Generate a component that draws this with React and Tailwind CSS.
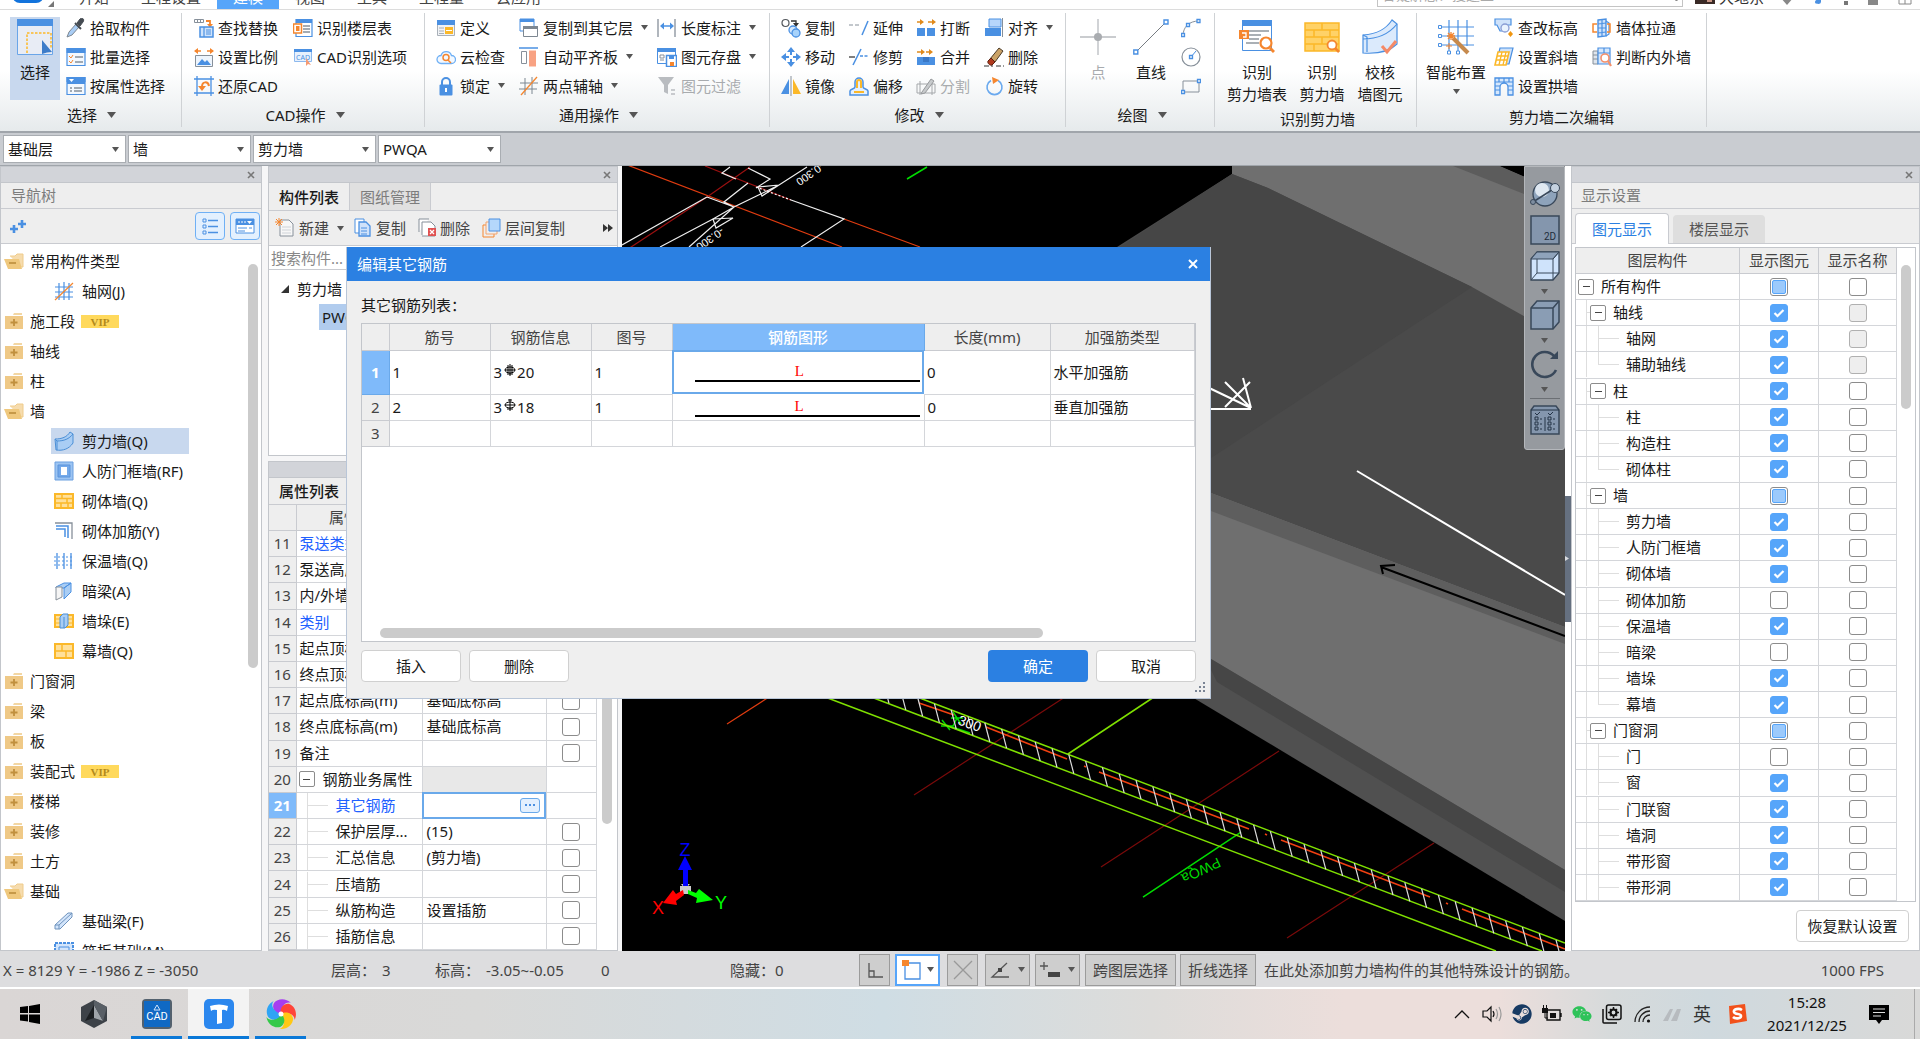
import React from "react";
import { FaSteam, FaWeixin } from "react-icons/fa";

const B = "#4a90e2";
const G = "#87909a";
const O = "#f5862e";
const Y = "#fbb829";

function Svg({ s = 20, vb = 20, children, className = "" }) {
  return (
    <svg
      width={s}
      height={s}
      viewBox={`0 0 ${vb} ${vb}`}
      fill="none"
      aria-hidden="true"
      className={"shrink-0 " + className}
    >
      {children}
    </svg>
  );
}

const windowFrame = (
  <>
    <path d="M1 1.500h18v17H1z" fill="#f3f8fe" stroke={B} strokeWidth="1.200" />
    <path d="M.5 1h19v5H.5z" fill={B} />
  </>
);

const icons = {
  pick: (
    <Svg>
      <path d="M1 19l2-5 7-8 3 3-7 8z" fill="#a9cdf5" stroke="#7d8791" />
      <path d="M9 5l6 6" stroke="#454b52" strokeWidth="2" />
      <path d="M11 5l3-4c2-2 5 0 3 3l-3 4z" fill="#454b52" stroke="#454b52" />
    </Svg>
  ),
  batch: (
    <Svg>
      {windowFrame}
      <path d="M3 9l2 2 2-3M3 14l2 2 2-3" stroke={O} />
      <path d="M9 10h8M9 15h8" stroke={G} strokeWidth="1.500" />
    </Svg>
  ),
  byprop: (
    <Svg>
      {windowFrame}
      <path d="M1 2h18v6H1z" fill={B} />
      <path d="M3 3h5l-2.500 3z" fill="#fff" />
      <path d="M4 12h2M8 12h8M4 15h2M8 15h8" stroke={G} strokeWidth="1.500" />
    </Svg>
  ),
  replace: (
    <Svg>
      <path d="M.5 1.500h9v3h-9zM3.500 1.500v3M6.500 1.500v3" stroke={G} />
      <path d="M12 3h4v4" stroke={O} strokeWidth="1.800" />
      <path d="M13 6h6l-3 3.500z" fill={O} />
      <path d="M6 9h13v10H6z" fill="#cfe3fb" stroke={B} strokeWidth="1.500" />
      <path d="M10 9v10M12 12h5M12 14h5M12 16h5" stroke={B} strokeWidth="1.200" />
    </Svg>
  ),
  scale: (
    <Svg>
      <path d="M1 4h6M13 4h6" stroke={O} strokeWidth="1.500" />
      <path d="M0 4l4-3v6zM20 4l-4-3v6z" fill={O} />
      <path d="M1.500 8.500h17v11h-17z" fill="#eef5fd" stroke={G} />
      <path d="M3 18l5-6 3 3 2-2 4 5z" fill={B} />
    </Svg>
  ),
  restore: (
    <Svg>
      <path d="M3 0v20M17 0v20M0 3h20M0 17h20" stroke={B} strokeWidth="1.300" />
      <path d="M15 10c-1-5-7-5-7 1" stroke={O} strokeWidth="2" />
      <path d="M4 10h8l-4 5z" fill={O} />
    </Svg>
  ),
  floor: (
    <Svg>
      <path d="M3 1.500h16v17H3z" fill="#fff" stroke={B} strokeWidth="1.200" />
      <path d="M3 1h16v4H3z" fill={B} />
      <path d="M10 8h7M10 11h7M10 14h7" stroke={G} strokeWidth="1.300" />
      <path d="M.500 6h8v9h-8z" fill="#fff" stroke={O} strokeWidth="1.500" />
      <path d="M3 8h3.500v5H3z" fill={O} />
    </Svg>
  ),
  cadopt: (
    <Svg>
      <path d="M1.500 2.500h17v12h-17z" fill="#e7f1fd" stroke="#8db9ee" />
      <path d="M1 2h18v3H1z" fill={B} />
      <text x="3" y="13" fontSize="7" fill={B} fontFamily="Noto Sans">CAD</text>
      <path d="M13 11v8l2-2 3 1z" fill="#f59a72" />
    </Svg>
  ),
  define: (
    <Svg>
      <path d="M1.500 2.500h17v15h-17z" fill="#f1f3f6" stroke="#a9b0b8" />
      <path d="M1 2h18v5H1z" fill={B} />
      <path d="M3 10h5M3 13h5M3 15.500h5" stroke="#a9b0b8" />
      <path d="M9 9h8v7H9z" fill={Y} />
      <path d="M10 12.500h6" stroke="#fff" />
    </Svg>
  ),
  cloud: (
    <Svg>
      <path d="M5 16.500a4 4 0 010-8 5.500 5.500 0 0110.500 0 4 4 0 010 8z" fill="#f2f8ff" stroke="#6fb0f5" strokeWidth="1.300" />
      <circle cx="10" cy="10.500" r="3" stroke={O} strokeWidth="1.500" />
      <path d="M12 13l3 3" stroke={O} strokeWidth="1.500" />
    </Svg>
  ),
  lock: (
    <Svg>
      <path d="M6 9V6a4 4 0 018 0v3" stroke={B} strokeWidth="2" />
      <rect x="3.500" y="8.500" width="13" height="11" rx="1" fill={B} />
      <path d="M10 12v4" stroke="#fff" strokeWidth="2" />
    </Svg>
  ),
  copyfloor: (
    <Svg>
      <path d="M1 1h14v12H1z" fill="#fff" stroke={B} />
      <path d="M1 1h14v3H1z" fill={B} />
      <path d="M4.500 8.500h14v10h-14z" fill="#fff" stroke="#7d8791" />
      <path d="M4 8h15v3H4z" fill="#7d8791" />
    </Svg>
  ),
  align: (
    <Svg>
      <path d="M0 1h19" stroke={B} strokeWidth="1.500" />
      <path d="M2.500 4.500h5v12h-5z" stroke={G} />
      <path d="M10 3.500h7v16h-7z" fill="#f8a283" />
    </Svg>
  ),
  axis: (
    <Svg>
      <path d="M6 2v17M13 1v17M1 7h18M0 13h18" stroke="#7d8791" />
      <path d="M2 19L18 1" stroke={O} strokeWidth="1.300" />
    </Svg>
  ),
  dim: (
    <Svg>
      <path d="M1 1v18M18 1v18" stroke={G} strokeWidth="1.300" />
      <path d="M4 8h11" stroke={B} strokeWidth="1.500" />
      <path d="M3 8l4-3.500v7zM17 8l-4-3.500v7z" fill={B} />
    </Svg>
  ),
  save: (
    <Svg>
      <path d="M.5 1.500h18v15H.5z" fill="#fff" stroke={B} />
      <path d="M0 1h19v4H0z" fill={B} />
      <path d="M3 8h4v3H3zM3 13h4" stroke={G} />
      <path d="M9.500 8.500h10v11h-10z" fill="#fff" stroke={B} strokeWidth="1.500" />
      <path d="M12 9h5v3h-5z" fill={B} />
      <path d="M13 15h4v4h-4z" fill={O} />
    </Svg>
  ),
  filter: (
    <Svg>
      <path d="M1 1h16l-6 8v9l-4-2V9z" fill="#b9bcc0" />
      <path d="M14 14h4M14 18h4" stroke="#b9bcc0" strokeWidth="1.500" />
    </Svg>
  ),
  copy: (
    <Svg>
      <circle cx="4.500" cy="5" r="3.500" stroke="#55595e" strokeWidth="1.200" />
      <path d="M10 3h5v3" stroke="#333" strokeWidth="1.300" />
      <path d="M12 5h6l-3 4z" fill="#333" />
      <circle cx="12" cy="12" r="4" fill="#d4e8fd" stroke={B} strokeWidth="1.300" />
      <circle cx="15" cy="15" r="4" fill="#a8d3fb" stroke={B} strokeWidth="1.300" />
    </Svg>
  ),
  move: (
    <Svg>
      <path d="M10 0l4 5H6zM10 20l4-5H6zM0 10l5-4v8zM20 10l-5-4v8z" fill={B} />
      <path d="M10 4v4M10 12v4M4 10h4M12 10h4" stroke={B} strokeWidth="2" />
    </Svg>
  ),
  mirror: (
    <Svg>
      <path d="M8 3v15H0z" fill={B} />
      <path d="M12 3v15h8z" fill={Y} />
      <path d="M10 0v20" stroke={G} />
    </Svg>
  ),
  extend: (
    <Svg>
      <path d="M0 7h12" stroke={G} strokeDasharray="4 2" />
      <path d="M13 17l6-14" stroke={B} strokeWidth="1.500" />
    </Svg>
  ),
  trim: (
    <Svg>
      <path d="M0 10h6" stroke="#555" strokeWidth="1.500" />
      <path d="M11 9h9" stroke={B} strokeDasharray="3 1.500" strokeWidth="1.500" />
      <path d="M4 18l8-16" stroke={B} strokeWidth="1.500" />
    </Svg>
  ),
  offset: (
    <Svg>
      <path d="M1 19h18v-4c0-2-5-2-5-4V6a4 4 0 00-8 0v5c0 2-5 2-5 4z" fill="#e4f0fd" stroke={B} strokeWidth="1.500" />
      <path d="M5 16h10M8 12V6a2 2 0 014 0v6" stroke={Y} strokeWidth="2" />
    </Svg>
  ),
  brk: (
    <Svg>
      <path d="M1 10h8v8H1zM11 10h8v8h-8z" fill={B} />
      <path d="M8 4L4 1v6zM20 4l-4-3v6z" fill="#e08a1c" />
      <path d="M1 4h4M12 4h5" stroke="#e08a1c" strokeWidth="1.500" />
    </Svg>
  ),
  merge: (
    <Svg>
      <path d="M1 10h18v8H1z" fill={B} />
      <path d="M7 10h6v5H7z" fill="#3a78c6" />
      <path d="M9 5L5 2v6zM17 5l-4-3v6z" fill="#e08a1c" />
      <path d="M1 5h4M10 5h4" stroke="#e08a1c" strokeWidth="1.500" />
    </Svg>
  ),
  split: (
    <Svg>
      <path d="M1 8h18v9H1zM4 5v14M16 5v14" stroke="#a4a7aa" />
      <path d="M6 16L15 3l3 2-9 12-4 1z" fill="#c7cacc" stroke="#97999c" />
    </Svg>
  ),
  align2: (
    <Svg>
      <path d="M5 1h12v8H5z" fill="#b7d6fb" stroke={B} />
      <path d="M1 10h16v8H1z" fill={B} />
      <path d="M18.500 0v19" stroke={G} />
    </Svg>
  ),
  erase: (
    <Svg>
      <path d="M0 19h9M12 19h8" stroke="#333" strokeDasharray="5 2" />
      <path d="M6 12l9-11 4 3-8 11z" fill="#caa267" stroke="#4c3b28" />
      <path d="M4 14l3-3 4 4-3 3c-2 1-5-2-4-4z" fill="#b13a1d" stroke="#5b2010" />
    </Svg>
  ),
  rotate: (
    <Svg>
      <path d="M7 4.500a7.500 7.500 0 107 0" stroke="#6aa9ee" strokeWidth="1.600" />
      <path d="M8 1l7 3-6 4z" fill={O} />
    </Svg>
  ),
  arc: (
    <Svg>
      <path d="M2 18C2 9 8 3 18 3" stroke={G} />
      <path d="M.5 15.500h3v3h-3zM5.500 5.500h3v3h-3zM16 1.500h3v3h-3z" fill="#fff" stroke={B} strokeWidth="1.300" />
    </Svg>
  ),
  circle: (
    <Svg>
      <circle cx="10" cy="10" r="9" stroke={G} strokeWidth="1.200" />
      <path d="M10 10l5-6" stroke={B} />
      <path d="M8.500 8.500h3v3h-3z" fill="#fff" stroke={B} strokeWidth="1.300" />
    </Svg>
  ),
  rect: (
    <Svg>
      <path d="M2 5h16v11H2z" stroke={G} />
      <path d="M.5 14.500h3v3h-3zM16.500 3.500h3v3h-3z" fill="#fff" stroke={B} strokeWidth="1.300" />
    </Svg>
  ),
  elev: (
    <Svg>
      <path d="M1 1h16v6h-4v6H6L3 7H1z" fill="#cfe2fa" stroke={B} strokeWidth="1.200" />
      <circle cx="11" cy="10" r="4" fill="#eaf3fe" stroke="#8a9dd4" strokeWidth="1.300" />
      <path d="M14 16l2.500-3 2.500 3-2.500 3z" fill="#f0950f" />
    </Svg>
  ),
  slant: (
    <Svg>
      <path d="M6 1h13l-4 16H2z" fill="#cfe2fa" stroke={B} strokeWidth="1.200" />
      <path d="M4 5h11l-3 13H1z" fill="#fff" stroke={Y} strokeWidth="1.600" />
      <path d="M8 5L5 18M12 5L9 18M3 9h11M2 13h11" stroke={Y} strokeWidth="1.300" />
    </Svg>
  ),
  arch: (
    <Svg>
      <path d="M1 2h18v17h-5V11a4 4 0 00-8 0v8H1z" fill="#d5e7fc" stroke={B} strokeWidth="1.300" />
      <path d="M1 6h18M1 10h5M14 10h5M1 14h5M14 14h5M5 2v4M10 2v5M15 2v4" stroke={B} strokeWidth="1.200" />
    </Svg>
  ),
  through: (
    <Svg>
      <path d="M6 2l8-1v17l-8 1z" fill="#cfe2fa" stroke={B} strokeWidth="1.400" />
      <path d="M6 6l8-1M6 10h8M6 15l8-1M10 2v17M14 3l3 2v11l-3 2" stroke={B} strokeWidth="1.200" />
      <path d="M5 6H1v8h4M15 6h3v8h-3" stroke={O} strokeWidth="1.500" />
    </Svg>
  ),
  judge: (
    <Svg>
      <path d="M1 4h5v13H1zM1 8h5M1 12h5" fill="#dfe5ec" stroke={G} />
      <path d="M6 1h12v16H6zM6 6h12M12 1v5" fill="#d5e7fc" stroke={B} strokeWidth="1.200" />
      <circle cx="13" cy="11" r="4" fill="#fff" stroke="#f5906a" strokeWidth="1.600" />
      <path d="M16 14l3 5" stroke="#f5906a" strokeWidth="2.200" />
    </Svg>
  ),
};

const big = {
  select: (
    <Svg s={36} vb={36}>
      <path d="M.5 1.500h35v34H.5z" fill="#e8ecf5" stroke="#6aa5e8" />
      <path d="M0 0h36v7H0z" fill={B} />
      <path d="M10 34V14h24v16" stroke={Y} strokeWidth="1.500" strokeDasharray="2.500 1.500" />
      <path d="M25 21l10 12-5 .5-5 1.500z" fill="#3d7cc9" />
    </Svg>
  ),
  point: (
    <Svg s={36} vb={36}>
      <path d="M18 0v36M0 18h36" stroke="#b9bcc0" strokeWidth="1.300" />
      <circle cx="18" cy="18" r="4" fill="#a9acb0" />
    </Svg>
  ),
  line: (
    <Svg s={36} vb={36}>
      <path d="M3 33L33 3" stroke="#777c82" />
      <path d="M.8 31h4v4h-4zM31 1h4v4h-4z" fill="#fff" stroke={B} strokeWidth="1.400" />
    </Svg>
  ),
  table: (
    <Svg s={36} vb={36}>
      <path d="M3.500 2.500h29v29h-29z" fill="#fff" stroke={B} />
      <path d="M3 1h30v6H3z" fill={B} />
      <path d="M10 12h20M10 16h12M10 20h10M7 24h13" stroke="#8f969d" strokeWidth="1.400" />
      <path d="M0 11h10v9H0z" fill={O} />
      <path d="M3 14h4v4H4" stroke="#fff" strokeWidth="1.300" />
      <circle cx="27" cy="24" r="5.500" fill="#fff" stroke={O} strokeWidth="2.200" />
      <path d="M31 29l4 4" stroke={O} strokeWidth="3" />
    </Svg>
  ),
  wall: (
    <Svg s={36} vb={36}>
      <path d="M1 4h34v28H1z" fill="#ffd267" stroke={Y} strokeWidth="1.500" />
      <path d="M1 11h34M1 18h34M1 25h34M18 4v7M10 11v7M26 11v7M18 18v7M10 25v7" stroke={Y} strokeWidth="1.500" />
      <circle cx="28" cy="26" r="4.500" fill="#fff" stroke={O} strokeWidth="1.800" />
      <path d="M31 29l4 4" stroke={O} strokeWidth="2.500" />
    </Svg>
  ),
  check: (
    <Svg s={36} vb={36}>
      <path d="M1 16C16 15 24 10 30 1l5 4v20c-8 8-20 10-34 9z" fill="#dbeafc" stroke={B} strokeWidth="1.200" />
      <path d="M1 20c16 0 26-5 34-15M1 16l4 2v15" stroke={B} strokeWidth="1.200" />
      <path d="M20 27l5 6 9-11" stroke="#f58a67" strokeWidth="3" />
    </Svg>
  ),
  smart: (
    <Svg s={36} vb={36}>
      <path d="M4 8h32M4 17h32M4 26h32M11 1v32M20 1v32M29 1v26" stroke={B} strokeWidth="1.200" />
      <path d="M.5 6.500h3v3h-3zM.5 15.500h3v3h-3zM.5 24.500h3v3h-3zM9.500 32h3v3h-3zM18.500 32h3v3h-3z" fill="#fff" stroke={B} />
      <path d="M15 19l15 15" stroke="#c68a4d" strokeWidth="4" />
      <path d="M13 13v8M9 17h8M10 14l6 6M16 14l-6 6" stroke={O} strokeWidth="1.300" />
      <path d="M11 24v6M8 27h6" stroke={O} />
    </Svg>
  ),
};

const Caret = ({ className = "" }) => (
  <svg width="7" height="5" viewBox="0 0 7 5" aria-hidden="true" className={"shrink-0 " + className}>
    <path d="M0 0h7L3.500 5z" fill="#555" />
  </svg>
);

function Tool({ icon, text, caret, disabled }) {
  return (
    <button
      type="button"
      disabled={disabled}
      className="flex h-[29px] items-center gap-1 whitespace-nowrap disabled:text-[#a8abae]"
    >
      {icons[icon]}
      <span>{text}</span>
      {caret && <Caret className="ml-1" />}
    </button>
  );
}

function Big({ icon, lines, className = "", disabled, caret }) {
  return (
    <button
      type="button"
      disabled={disabled}
      className={"mt-1 flex min-h-[83px] flex-col items-center gap-[6px] whitespace-nowrap pt-[2px] leading-[22px] disabled:text-[#a8abae] " + className}
    >
      {big[icon]}
      <span>
        {lines.map((l) => (
          <span key={l} className="block">{l}</span>
        ))}
      </span>
      {caret && <Caret />}
    </button>
  );
}

function Group({ label, caret, className, children }) {
  return (
    <section className={"flex shrink-0 flex-col border-r border-[#cfd2d5] " + className}>
      <div className="flex h-[90px] items-start">{children}</div>
      <h2 className={"flex flex-1 items-center justify-center gap-[10px] pr-2 " + (caret ? "" : "pt-[6px]")}>
        {label}
        {caret && (
          <svg width="9" height="6" viewBox="0 0 9 6" aria-hidden="true"><path d="M0 0h9L4.500 6z" fill="#555" /></svg>
        )}
      </h2>
    </section>
  );
}

const Col = ({ children, className = "" }) => (
  <div className={"flex shrink-0 flex-col items-start " + className}>{children}</div>
);

function Header() {
  const tabs = ["开始", "工程设置", "建模", "视图", "工具", "工程量", "云应用"];
  return (
    <header className="flex h-[10px] shrink-0 items-end justify-between overflow-hidden border-b border-[#dcdcdc] bg-white">
      <div className="flex items-end">
        <div className="flex h-6 w-[63px] items-start pl-3">
          <span className="block h-[18px] w-8 rounded-b-lg bg-[#1273dc]" />
          <Svg s={6} vb={6} className="ml-1 mt-4"><path d="M6 0v6H0z" fill="#777" /></Svg>
        </div>
        <nav className="flex">
          {tabs.map((t) => (
            <button
              key={t}
              type="button"
              className={"h-6 px-4 leading-6 " + (t === "建模" ? "bg-[#56a5fa] text-white" : "text-[#444]")}
            >
              {t}
            </button>
          ))}
        </nav>
      </div>
      <div className="flex items-end pr-2">
        <div className="mb-[2px] flex h-6 w-[306px] items-center justify-between border border-[#c4c4c4] px-1">
          <input aria-label="搜索" placeholder="答疑解惑？搜这里" className="w-40 text-sm placeholder:text-[#aaa] outline-none" />
          <Svg s={12} vb={12}><circle cx="5" cy="5" r="3.500" stroke="#888" /><path d="M8 8l3 4" stroke="#888" strokeWidth="2" /></Svg>
        </div>
        <div className="ml-3 flex h-6 items-center gap-1 leading-6">
          <Svg><path d="M0 0h20v17H0z" fill="#3a2a26" /><path d="M5 8h4v5H5zM12 11h5v4h-5z" fill="#c59484" /></Svg>
          <span className="text-[#333]">大地东</span>
        </div>
        <div className="ml-4 flex items-end gap-5 pb-1">
          <Svg s={14} vb={14}><path d="M0 6h14l-7 8z" fill="#888" /></Svg>
          <Svg s={10} vb={10}><path d="M7 0v7a3 2 0 11-2-2V0z" fill={B} /></Svg>
          <Svg s={4} vb={4}><path d="M0 0h4v4H0z" fill="#777" /></Svg>
          <Svg s={10} vb={10}><path d="M0 0h10v10H0z" fill="#888" /></Svg>
          <Svg s={14} vb={14}><path d="M1 0h12v13H1zM7 0v13M1 8h12" stroke="#888" /></Svg>
        </div>
      </div>
    </header>
  );
}

function Ribbon() {
  return (
    <div className="flex h-[121px] shrink-0 overflow-hidden bg-linear-to-b from-white from-50% to-[#e6eaec] pb-1 pt-[3px]">
      <Group label="选择" caret className="w-[182px] pl-[10px]">
        <Big icon="select" lines={["选择"]} className="w-[50px] bg-[#c8d8ee]" />
        <Col className="ml-[6px]">
          <Tool icon="pick" text="拾取构件" />
          <Tool icon="batch" text="批量选择" />
          <Tool icon="byprop" text="按属性选择" />
        </Col>
      </Group>
      <Group label="CAD操作" caret className="w-[243px] pl-3">
        <Col className="w-[99px]">
          <Tool icon="replace" text="查找替换" />
          <Tool icon="scale" text="设置比例" />
          <Tool icon="restore" text="还原CAD" />
        </Col>
        <Col>
          <Tool icon="floor" text="识别楼层表" />
          <Tool icon="cadopt" text="CAD识别选项" />
        </Col>
      </Group>
      <Group label="通用操作" caret className="w-[345px] pl-[11px]">
        <Col className="w-[83px]">
          <Tool icon="define" text="定义" />
          <Tool icon="cloud" text="云检查" />
          <Tool icon="lock" text="锁定" caret />
        </Col>
        <Col className="w-[138px]">
          <Tool icon="copyfloor" text="复制到其它层" caret />
          <Tool icon="align" text="自动平齐板" caret />
          <Tool icon="axis" text="两点辅轴" caret />
        </Col>
        <Col>
          <Tool icon="dim" text="长度标注" caret />
          <Tool icon="save" text="图元存盘" caret />
          <Tool icon="filter" text="图元过滤" disabled />
        </Col>
      </Group>
      <Group label="修改" caret className="w-[296px] pl-[11px]">
        <Col className="w-[68px]">
          <Tool icon="copy" text="复制" />
          <Tool icon="move" text="移动" />
          <Tool icon="mirror" text="镜像" />
        </Col>
        <Col className="w-[67px]">
          <Tool icon="extend" text="延伸" />
          <Tool icon="trim" text="修剪" />
          <Tool icon="offset" text="偏移" />
        </Col>
        <Col className="w-[68px]">
          <Tool icon="brk" text="打断" />
          <Tool icon="merge" text="合并" />
          <Tool icon="split" text="分割" disabled />
        </Col>
        <Col>
          <Tool icon="align2" text="对齐" caret />
          <Tool icon="erase" text="删除" />
          <Tool icon="rotate" text="旋转" />
        </Col>
      </Group>
      <Group label="绘图" caret className="w-[149px] pl-3">
        <Big icon="point" lines={["点"]} className="w-10" disabled />
        <Big icon="line" lines={["直线"]} className="ml-[13px] w-10" />
        <Col className="ml-[10px]">
          {[["arc", "弧"], ["circle", "圆"], ["rect", "矩形"]].map(([i, l]) => (
            <button key={i} type="button" aria-label={l} className="flex h-[29px] items-center">{icons[i]}</button>
          ))}
        </Col>
      </Group>
      <Group label="识别剪力墙" className="w-[202px] pl-3">
        <Big icon="table" lines={["识别", "剪力墙表"]} className="w-[60px]" />
        <Big icon="wall" lines={["识别", "剪力墙"]} className="ml-[10px] w-[50px]" />
        <Big icon="check" lines={["校核", "墙图元"]} className="ml-[8px] w-[50px]" />
      </Group>
      <Group label="剪力墙二次编辑" className="w-[290px] pl-2">
        <Big icon="smart" lines={["智能布置"]} caret className="w-[62px]" />
        <Col className="ml-[7px] w-[98px]">
          <Tool icon="elev" text="查改标高" />
          <Tool icon="slant" text="设置斜墙" />
          <Tool icon="arch" text="设置拱墙" />
        </Col>
        <Col>
          <Tool icon="through" text="墙体拉通" />
          <Tool icon="judge" text="判断内外墙" />
        </Col>
      </Group>
    </div>
  );
}

function Combos() {
  return (
    <div className="flex h-[35px] shrink-0 items-center gap-[2px] border-b border-t-2 border-[#a0a5ab] bg-[#c9ccd1] px-[3px]">
      {[["楼层", "基础层"], ["构件大类", "墙"], ["构件类型", "剪力墙"], ["构件", "PWQA"]].map(([n, v]) => (
        <label key={n} className="grid h-7 w-[123px] items-center border border-[#a9adb2] bg-white">
          <select aria-label={n} className="col-start-1 row-start-1 h-full w-full appearance-none pl-1 outline-none">
            <option>{v}</option>
          </select>
          <Caret className="col-start-1 row-start-1 mr-[6px] justify-self-end" />
        </label>
      ))}
    </div>
  );
}

function Strip() {
  return (
    <div className="flex h-4 shrink-0 items-center justify-end border-b border-[#c3c6cb] bg-[#d2d4d9] pr-[6px]">
      <button type="button" aria-label="关闭">
        <Svg s={8} vb={8}><path d="M1 1l6 6M7 1L1 7" stroke="#777" strokeWidth="1.600" /></Svg>
      </button>
    </div>
  );
}

const Folder = ({ open }) =>
  open ? (
    <Svg>
      <path d="M6 5h5l2-2h6v13h-3" fill="#f6dcae" stroke="#efcc8c" />
      <path d="M0 8h15l3 10H4z" fill="#efc87d" />
      <path d="M5 12h7" stroke="#b98a37" strokeWidth="1.500" />
    </Svg>
  ) : (
    <Svg>
      <path d="M10 2h8v2h-9z" fill="#f3d7a4" />
      <path d="M1 5h18v13H1z" fill="#efc987" />
      <path d="M10 8v7M6.500 11.500h7" stroke="#c08f3d" strokeWidth="1.800" />
    </Svg>
  );

const treeIcons = {
  grid: <Svg><path d="M5 2v17M10 1v18M15 2v17M1 6h18M1 11h18M1 16h18" stroke={B} strokeWidth="1.200" /><path d="M1 19L19 2" stroke={O} strokeWidth="1.200" /></Svg>,
  shear: <Svg><path d="M1 8c7 0 12-2 15-7l3 2v9c-4 6-10 8-17 7z" fill="#a9cdf4" stroke="#4b8fd6" /><path d="M1 8l2 2c7 0 12-2 16-7M3 10v9" stroke="#4b8fd6" /></Svg>,
  frame: <Svg><path d="M1 1h18v18H1z" fill="#9cc4f2" stroke="#6a9fe0" /><path d="M4 4h12v12H4z" fill="#74a9ea" stroke="#5b94dc" /><path d="M7 6h6v8H7z" fill="#fff" /></Svg>,
  brick: <Svg><path d="M1 3h18v14H1z" fill="#ffe09a" stroke={Y} strokeWidth="2" /><path d="M1 7.500h18M1 12h18M8 3v4.500M13 7.500V12M7 12v5M14 12v5" stroke={Y} strokeWidth="1.500" /></Svg>,
  bar: <Svg><path d="M1 2h17v16" stroke={G} strokeWidth="1.300" /><path d="M2 5h12v12M2 8h9v8" stroke={B} strokeWidth="1.500" /></Svg>,
  insul: <Svg><path d="M3 2v16M10 2v16M17 2v16" stroke={B} strokeWidth="1.300" /><path d="M0 6h20M0 10h20M0 14h20" stroke={B} strokeDasharray="2 2" /></Svg>,
  beam: <Svg><path d="M2 6l8-4h7l-7 5H2zM10 7l7-5v9l-7 7z" fill="#a9cdf4" stroke={B} /><path d="M2 6h6v10l-6 3z" fill="#f5f5f5" stroke={G} /></Svg>,
  pier: <Svg><path d="M1 4h18v12H1z" fill="#ffe09a" stroke={Y} strokeWidth="2" /><path d="M1 8h18M1 12h18" stroke={Y} /><path d="M6 6l3-3h5v11l-3 3H6z" fill="#a9cdf4" stroke="#4b8fd6" /><path d="M10 6v11" stroke="#4b8fd6" /></Svg>,
  curtain: <Svg><path d="M1 3h18v14H1z" fill="#ffe09a" stroke={Y} strokeWidth="2" /><path d="M1 10h18M8 3v7M12 10v7" stroke={Y} strokeWidth="1.500" /></Svg>,
  fbeam: <Svg><path d="M1 14L14 2h4v4L6 18H1z" fill="#d3e5fb" stroke="#6f93bd" /><path d="M1 14h4v4M5 14L18 2" stroke="#6f93bd" /></Svg>,
  raft: <Svg><path d="M1 2h18v16H1z" fill="#d3e5fb" stroke={B} strokeWidth="2" strokeDasharray="3 1" /><path d="M5 6h10v8H5z" stroke={B} /></Svg>,
};

const tree = [
  ["open", "常用构件类型"], ["grid", "轴网(J)"], ["shut", "施工段", 1], ["shut", "轴线"], ["shut", "柱"], ["open", "墙"],
  ["shear", "剪力墙(Q)"], ["frame", "人防门框墙(RF)"], ["brick", "砌体墙(Q)"], ["bar", "砌体加筋(Y)"], ["insul", "保温墙(Q)"],
  ["beam", "暗梁(A)"], ["pier", "墙垛(E)"], ["curtain", "幕墙(Q)"], ["shut", "门窗洞"], ["shut", "梁"], ["shut", "板"],
  ["shut", "装配式", 1], ["shut", "楼梯"], ["shut", "装修"], ["shut", "土方"], ["open", "基础"], ["fbeam", "基础梁(F)"], ["raft", "筏板基础(M)"],
];

function NavPanel() {
  return (
    <aside className="flex w-[262px] shrink-0 flex-col border border-[#c3c6cb] bg-white">
      <Strip />
      <h2 className="h-[26px] shrink-0 border-b border-[#c9cbd0] bg-[#eee] pl-[10px] leading-6 text-[#7d7d7d]">导航树</h2>
      <div className="flex h-[35px] shrink-0 items-center gap-[5px] border-b border-[#c9cbd0] bg-[#eee] pl-[9px] pr-px">
        <button type="button" aria-label="添加" className="mr-auto">
          <Svg s={16} vb={16}><path d="M4 7v8M0 11h8M12 2v8M8 6h8" stroke={B} strokeWidth="2.600" /></Svg>
        </button>
        <button type="button" aria-label="列表视图" className="grid h-7 w-[30px] place-items-center rounded-[4px] border border-[#6fb0f5] bg-[#e3f0fe]">
          <Svg><path d="M3 3h3v3H3zM3 9h3v3H3zM3 15h3v3H3z" stroke={B} /><path d="M8 4.500h10M8 10.500h10M8 16.500h10" stroke={B} strokeWidth="1.300" /></Svg>
        </button>
        <button type="button" aria-label="卡片视图" className="grid h-7 w-[30px] place-items-center rounded-[4px] border border-[#6fb0f5] bg-[#e3f0fe]">
          <Svg><path d="M1 3h18v14H1z" fill="#fff" stroke={B} /><path d="M1 3h18v6H1z" fill={B} /><path d="M4 5v2M7 5v2M10 5v2" stroke="#fff" /><path d="M12 5h5l-2.500 3z" fill="#fff" /><path d="M3 12h9M3 15h7M14 12h3" stroke={B} /></Svg>
        </button>
      </div>
      <div className="flex min-h-0 flex-1">
        <ul className="min-w-0 flex-1 overflow-hidden pt-[2px]">
          {tree.map(([ic, t, vip]) =>
            ic === "open" || ic === "shut" ? (
              <li key={t} className="flex h-[30px] items-center pl-[3px]">
                <Folder open={ic === "open"} />
                <span className="ml-[6px]">{t}</span>
                {vip && (
                  <span className="ml-[6px] h-[13px] w-[38px] bg-[#ffd95c] text-center font-['Liberation_Serif',serif] text-[11px] font-bold leading-[14px] text-[#b38a1c]">VIP</span>
                )}
              </li>
            ) : (
              <li key={t} className="flex h-[30px] items-center pl-[50px]">
                <span className={"flex h-[26px] items-center gap-2 whitespace-nowrap pl-[3px] " + (t === "剪力墙(Q)" ? "w-[138px] bg-[#c8d8ee]" : "")}>
                  {treeIcons[ic]}
                  {t}
                </span>
              </li>
            )
          )}
        </ul>
        <div className="mr-[3px] mt-5 h-[404px] w-[10px] rounded-full bg-[#cbcbcb]" />
      </div>
    </aside>
  );
}

function Box({ state, label }) {
  return (
    <span className="mx-auto grid h-[18px] w-[18px] place-items-center">
      <input
        type="checkbox"
        aria-label={label}
        defaultChecked={state === "on"}
        disabled={state === "off-disabled"}
        className="col-start-1 row-start-1 h-[18px] w-[18px] appearance-none rounded-[3px] border border-[#8c8c8c] bg-white checked:border-[#56a5fa] checked:bg-[#56a5fa] disabled:border-[#b0b0b0] disabled:bg-[#eee]"
      />
      {state === "on" && (
        <Svg s={12} vb={12} className="pointer-events-none col-start-1 row-start-1"><path d="M1.500 6l3 3 6-6" stroke="#fff" strokeWidth="2.200" /></Svg>
      )}
      {state === "part" && (
        <span className="pointer-events-none col-start-1 row-start-1 h-[14px] w-[14px] rounded-[2px] border border-[#56a5fa] bg-[#9ccafc]" />
      )}
    </span>
  );
}

const Minus = () => (
  <button type="button" aria-label="折叠" className="grid h-4 w-4 shrink-0 place-items-center rounded-[2px] border border-[#8c8c8c] bg-white">
    <span className="h-px w-[7px] bg-[#444]" />
  </button>
);

const props = [
  [11, "泵送类型", "", 1], [12, "泵送高度(m)", ""], [13, "内/外墙标志", ""], [14, "类别", "", 1], [15, "起点顶标高(m)", ""],
  [16, "终点顶标高(m)", ""], [17, "起点底标高(m)", "基础底标高"], [18, "终点底标高(m)", "基础底标高"], [19, "备注", ""],
  [20, "钢筋业务属性", ""], [21, "其它钢筋", "", 1], [22, "保护层厚...", "(15)"], [23, "汇总信息", "(剪力墙)"],
  [24, "压墙筋", ""], [25, "纵筋构造", "设置插筋"], [26, "插筋信息", ""],
];

function PropsTable() {
  const th = "border-b border-r border-[#c9cbd0] p-0 font-normal";
  return (
    <table className="h-full flex-1 table-fixed border-collapse whitespace-nowrap leading-[25px]">
      <colgroup>
        <col className="w-[27px]" /><col className="w-[126px]" /><col className="w-[124px]" /><col />
      </colgroup>
      <thead>
        <tr className="bg-[#eee] text-[#444]">
          <th className={th} />
          <th className={th}>属性名称</th>
          <th className={th}>属性值</th>
          <th className={th}>附加</th>
        </tr>
      </thead>
      <tbody>
        {props.map(([n, name, val, blue]) => (
          <tr key={n}>
            <th className={"border-b border-r border-[#c9cbd0] p-0 " + (n === 21 ? "bg-[#7fbafa] font-bold text-white" : "bg-[#eee] font-normal text-[#444]")}>{n}</th>
            <td className={"overflow-hidden border-b border-r border-[#d4d6da] p-0 " + (blue ? "text-[#2060ff]" : "")}>
              {n > 20 ? (
                <div className="flex h-[25px] items-center pl-[10px]">
                  <span className="h-[25px] w-px bg-[#dedede]" />
                  <span className="mr-2 h-px w-5 bg-[#dedede]" />
                  {name}
                </div>
              ) : n === 20 ? (
                <div className="flex h-[25px] items-center gap-2 pl-[2px]"><Minus />{name}</div>
              ) : (
                <div className="h-[25px] pl-[3px]">{name}</div>
              )}
            </td>
            <td className={"border-b border-r border-[#d4d6da] p-0 " + (n === 20 ? "bg-[#e8e8e8]" : n === 21 ? "outline-2 -outline-offset-2 outline-[#6aa9ea]" : "")}>
              {n === 21 ? (
                <div className="flex h-[25px] items-center justify-end pr-[6px]">
                  <button type="button" aria-label="编辑其它钢筋" className="flex h-[15px] w-5 items-center justify-center gap-[2px] rounded-[3px] border border-[#6aa9ea] bg-[#e3f0fe]">
                    <i className="h-[2px] w-[2px] bg-[#4a90e2]" /><i className="h-[2px] w-[2px] bg-[#4a90e2]" /><i className="h-[2px] w-[2px] bg-[#4a90e2]" />
                  </button>
                </div>
              ) : (
                <div className="h-[25px] pl-1">{val}</div>
              )}
            </td>
            <td className="border-b border-r border-[#d4d6da] p-0">
              {n !== 20 && n !== 21 && <Box label={name + "附加"} />}
            </td>
          </tr>
        ))}
      </tbody>
    </table>
  );
}

function MidPanel() {
  return (
    <div className="ml-[6px] flex w-[350px] shrink-0 flex-col">
      <section className="flex h-[290px] shrink-0 flex-col border border-[#c3c6cb] bg-white">
        <Strip />
        <div className="flex h-7 shrink-0 border-b border-[#c9cbd0] bg-[#eee]">
          <button type="button" className="w-[81px] border-r border-[#c9cbd0] font-medium">构件列表</button>
          <button type="button" className="w-[81px] border-r border-[#c9cbd0] bg-[#e0e0e0] text-[#7d7d7d]">图纸管理</button>
        </div>
        <div className="flex h-[35px] shrink-0 items-center gap-[10px] border-b border-[#c9cbd0] bg-[#eee] pl-[6px] text-[#444]">
          <button type="button" className="flex items-center gap-1">
            <Svg><path d="M5 2h9l4 4v12H5z" fill="#f7f7f7" stroke={G} /><path d="M7 9h9M7 12h9M7 15h9" stroke="#cfd3d8" /><path d="M4 0v8M0 4h8M1 1l6 6M7 1L1 7" stroke={O} /></Svg>
            新建
            <Caret className="ml-1" />
          </button>
          <button type="button" className="flex items-center gap-[2px]">
            <Svg><path d="M1 1h9v14H1z" stroke={B} fill="#fff" /><path d="M5 4h7l4 4v10H5z" fill="#cfe2fa" stroke={B} strokeWidth="1.300" /><path d="M7 10h6M7 13h6M7 16h6" stroke={B} /></Svg>
            复制
          </button>
          <button type="button" className="ml-[2px] flex items-center gap-[2px]">
            <Svg><path d="M1 14V1h10M4 17V4h9l4 4v10H4" fill="#fff" stroke={G} /><path d="M10 10h8v8h-8z" fill="#e05252" /><path d="M12 12l4 4M16 12l-4 4" stroke="#fff" strokeWidth="1.300" /></Svg>
            删除
          </button>
          <button type="button" className="ml-[2px] flex items-center gap-[3px]">
            <Svg><path d="M4 7H1v12h11v-3" stroke={O} /><path d="M7 4H4v12h11v-3" stroke="#f3a46e" /><path d="M7 1h11v12H7z" fill="#b5d7fb" stroke={B} /></Svg>
            层间复制
          </button>
          <button type="button" aria-label="更多" className="ml-auto mr-1">
            <Svg s={10} vb={10}><path d="M0 1l5 4-5 4zM5 1l5 4-5 4z" fill="#333" /></Svg>
          </button>
        </div>
        <input aria-label="搜索构件" placeholder="搜索构件..." className="h-6 shrink-0 border-b border-[#c9cbd0] pl-[2px] outline-none placeholder:text-[#888]" />
        <div className="flex flex-col pt-1">
          <div className="flex h-[30px] items-center gap-2 pl-3">
            <Svg s={8} vb={8}><path d="M8 0v8H0z" fill="#333" /></Svg>
            剪力墙
          </div>
          <div className="ml-[50px] h-[26px] w-[120px] bg-[#b1ccee] pl-[3px] leading-[26px]">PWQA</div>
        </div>
      </section>
      <section className="mt-[5px] flex min-h-0 flex-1 flex-col border border-[#c3c6cb] bg-white">
        <Strip />
        <h2 className="h-[27px] shrink-0 border-b border-[#c9cbd0] bg-[#eee] pl-[10px] font-medium leading-[26px]">属性列表</h2>
        <div className="flex min-h-0 flex-1">
          <PropsTable />
          <div className="w-5 pl-[5px]"><div className="h-[319px] w-[10px] rounded-full bg-[#cbcbcb]" /></div>
        </div>
      </section>
    </div>
  );
}

const ticks = Array.from({ length: 41 }, (_, i) => 884 + i * 16.8);

function Scene() {
  return (
    <svg viewBox="622 166 943 785" preserveAspectRatio="xMidYMid slice" className="h-full w-full" fill="none" role="img" aria-label="三维模型">
      <path d="M622 166h943v785H622z" fill="#000" />
      <path d="M1232 166h221l47 0 65 28v760L1192 697 1100 600V300l132-126z" fill="#6f6f6f" />
      <path d="M1453 166h47l65 28v16z" fill="#5c5c5c" />
      <path d="M1500 166h65v28z" fill="#000" />
      <path d="M1232 174l36 14 204 99 93 52v288l-354-134L1000 414v-84l117-83z" fill="#4a4a4a" />
      <path d="M1232 174l36 14 204 99-261 171-111 10V260z" fill="#464646" />
      <path d="M1211 493l354 134v17L1211 511z" fill="#5e5e5e" />
      <path d="M1211 659l354 211v81L1192 697z" fill="#505050" />
      <path d="M1200 648l11 11 354 211v22L1217 682z" fill="#464646" />
      <path d="M1192 697l373 224v30H1000V697z" fill="#000" />
      <g stroke="#fff" strokeWidth="2">
        <path d="M1205 386l46 22M1205 409h46M1225 382l26 26M1243 378l8 30M1225 407l25-25M1357 471l208 124" />
      </g>
      <path d="M1381 567l184 69M1395 565l-14 1 2 8" stroke="#000" strokeWidth="2" />
      <g strokeWidth="1.200">
        <path d="M622 163l220 84M844 219l76 28M769 697l-42 27" stroke="#e03c10" />
        <path d="M705 166l86 34M750 167l-43 30-85 56" stroke="#9a1010" />
        <path d="M1065 697l-151 98M1279 751l-178 116M1434 843l-147 95" stroke="#7a0a0a" />
        <path d="M707 197l-85 48M707 197l27 10M791 200l53 19-43 28M807 167l-28 18-45 22-45 40M713 219l-53 28M734 207l-21 12M748 183l-24 19 10 5M730 167l-8 6 14 6M748 168l22 11-14 9M758 187l21-2-17 11zM713 219l20-1-17 10z" stroke="#eee" />
        <path d="M756 187l35 13" stroke="#fff" strokeDasharray="2 2" />
        <path d="M927 167l-20 12M1241 832l-98 65M957 718l-5 10M946 725l24 8M953 712l8 12M951 718h12M942 720l8 10M941 726h12" stroke="#0d0" strokeWidth="1.500" />
        <path d="M917 697l648 246M871 697l671 254M825 697l671 254M1154 697l-86 57" stroke="#7fe000" strokeWidth="1.500" />
        <path d="M919 703l35 12M986 727l81 32M1099 772l150 57M1281 840l149 57M1462 909l103 40M1084 766l2 1M1265 834l2 1M1446 903l2 1" stroke="#f04010" strokeWidth="1.500" />
        {ticks.map((x) => (
          <path key={x} d={`M${x} ${697 + (x - 917) * 0.38}l5 19`} stroke="#ddd" />
        ))}
      </g>
      <g fontFamily="Liberation Sans, sans-serif" fontSize="11" textAnchor="middle">
        <text transform="translate(808 171) rotate(145)" fill="#fff">-0.300</text>
        <text transform="translate(708 236) rotate(145)" fill="#fff">-0.300</text>
        <text transform="translate(968 728) rotate(20)" fill="#fff" fontSize="14">300</text>
        <text transform="translate(1199 866) rotate(155)" fill="#0d0" fontSize="14">PWQa</text>
      </g>
      <path d="M685 889l-4-5h9zM680 886h11v8h-11z" fill="#ccc" />
      <path d="M683 886v-16h-5l7-14 7 14h-4v16z" fill="#00f" />
      <path d="M683 890l-7 4-3-4-10 13 14 2-1-4 8-6z" fill="#f00" />
      <path d="M688 890l8 3 3-4 14 11-17 3 1-5-9-4z" fill="#0f0" />
      <g fontFamily="Liberation Sans, sans-serif" fontSize="18" textAnchor="middle">
        <text x="685" y="856" fill="#00f">Z</text>
        <text x="658" y="914" fill="#f00">X</text>
        <text x="721" y="909" fill="#0f0">Y</text>
      </g>
    </svg>
  );
}

function ViewBar() {
  const S = "#39485a";
  const items = [
    ["动态观察", <><circle cx="15" cy="15" r="12" fill="#8ea3bb" stroke={S} strokeWidth="1.300" /><circle cx="12" cy="11" r="7" fill="#dfe8f1" /><path d="M3 23L25 9" stroke={S} strokeWidth="1.500" /><circle cx="25" cy="9" r="4.500" fill="#c5d2e0" stroke={S} /><circle cx="3" cy="23" r="2.500" fill="#7d8da0" stroke={S} /></>],
    ["二维", <><path d="M1 1h28v28H1z" fill="#8496ad" stroke={S} strokeWidth="1.500" /><text x="14" y="25" fontSize="10" fill="#1f2c3b" fontFamily="Roboto">2D</text></>],
    ["线框", <><path d="M1 8l6-7h22v21l-6 7H1z" fill="#cfe3fb" stroke={S} strokeWidth="1.300" /><path d="M1 8l6-7h22l-6 7z" fill="#8fa3bb" stroke={S} /><path d="M23 8v21M7 8v14h16M7 22l-6 7M23 22h6M23 8l6-7" stroke={S} /></>, 1],
    ["实体", <><path d="M1 8l6-7h22v21l-6 7H1z" fill="#8a9db4" stroke={S} strokeWidth="1.500" /><path d="M1 8h22v21M23 8l6-7" stroke={S} strokeWidth="1.500" /></>, 1],
    ["旋转", <><path d="M24 7a12.500 12.500 0 102 14" stroke={S} strokeWidth="2.600" /><path d="M20 10h8V2z" fill={S} /></>, 1],
    ["显示设置", <><path d="M4 1h22l3 4v24H1V5z" fill="#8496ad" stroke={S} strokeWidth="1.500" /><path d="M1 5h28M15 12v14M5 8l2 2 3-3M18 8l2 2 3-3M5 12h3v3H5zM5 17h3v3H5zM5 22h3v3H5zM18 12h3v3h-3zM18 17h3v3h-3zM18 22h3v3h-3zM10 14h2M10 19h2M10 24h2M23 14h2M23 19h2M23 24h2" stroke="#243447" /></>],
  ];
  return (
    <div className="absolute right-0 top-0 flex w-[41px] flex-col items-center gap-[6px] rounded-b-[3px] border border-[#b4b7bb] bg-[#969a9f] pb-[14px] pt-3">
      {items.map(([l, d, c], i) => (
        <button key={l} type="button" aria-label={l} className={"flex flex-col items-center gap-2 " + (i === 5 ? "border-t border-[#6b6f74] pt-[6px]" : "")}>
          <Svg s={30} vb={30}>{d}</Svg>
          {c && <Caret />}
        </button>
      ))}
    </div>
  );
}

const layers = [
  [0, "所有构件", "part", ""], [1, "轴线", "on", "off-disabled"], [2, "轴网", "on", "off-disabled"], [2, "辅助轴线", "on", "off-disabled"],
  [1, "柱", "on"], [2, "柱", "on"], [2, "构造柱", "on"], [2, "砌体柱", "on"], [1, "墙", "part"], [2, "剪力墙", "on"], [2, "人防门框墙", "on"],
  [2, "砌体墙", "on"], [2, "砌体加筋", ""], [2, "保温墙", "on"], [2, "暗梁", ""], [2, "墙垛", "on"], [2, "幕墙", "on"], [1, "门窗洞", "part"],
  [2, "门", ""], [2, "窗", "on"], [2, "门联窗", "on"], [2, "墙洞", "on"], [2, "带形窗", "on"], [2, "带形洞", "on"],
];

function DisplayPanel() {
  const th = "border-b border-r border-[#c9cbd0] p-0 font-normal";
  return (
    <aside className="flex w-[349px] shrink-0 flex-col border border-[#c3c6cb] bg-white">
      <Strip />
      <h2 className="h-[26px] shrink-0 border-b border-[#c9cbd0] bg-[#eee] pl-[9px] leading-6 text-[#7d7d7d]">显示设置</h2>
      <div className="flex h-[35px] shrink-0 items-end gap-1 border-b border-[#c9cbd0] bg-[#eee] pl-[3px]">
        <button type="button" className="-mb-px h-[31px] w-[94px] rounded-t-[4px] border border-b-0 border-[#c9cbd0] bg-white text-[#2b80e2]">图元显示</button>
        <button type="button" className="h-7 w-[92px] rounded-t-[4px] bg-[#dedede] text-[#555]">楼层显示</button>
      </div>
      <div className="mx-[3px] mt-[3px] flex min-h-0 flex-1 border border-[#c3c6cb]">
        <table className="h-full flex-1 table-fixed border-collapse whitespace-nowrap leading-[25px]">
          <colgroup><col /><col className="w-[79px]" /><col className="w-[78px]" /></colgroup>
          <thead>
            <tr className="bg-[#eee] text-[#444]">
              <th className={th}>图层构件</th>
              <th className={th}>显示图元</th>
              <th className={th}>显示名称</th>
            </tr>
          </thead>
          <tbody>
            {layers.map(([d, t, a, b], i) => (
              <tr key={i}>
                <td className="border-b border-r border-[#d4d6da] p-0">
                  {d === 0 && <div className="flex h-[25px] items-center gap-[7px] pl-[2px]"><Minus />{t}</div>}
                  {d === 1 && (
                    <div className="flex h-[25px] items-center pl-[10px]">
                      <span className="h-[25px] w-px bg-[#dedede]" />
                      <span className="h-px w-[3px] bg-[#dedede]" />
                      <Minus />
                      <span className="ml-[7px]">{t}</span>
                    </div>
                  )}
                  {d === 2 && (
                    <div className="flex h-[25px] items-center pl-[10px]">
                      <span className="h-[25px] w-px bg-[#dedede]" />
                      <span className={"ml-[11px] w-px bg-[#dedede] " + (layers[i + 1] && layers[i + 1][0] < 2 ? "h-[13px] self-start" : "h-[25px]")} />
                      <span className="mr-[7px] h-px w-5 bg-[#dedede]" />
                      {t}
                    </div>
                  )}
                </td>
                <td className="border-b border-r border-[#d4d6da] p-0"><Box state={a} label={t + " 显示图元"} /></td>
                <td className="border-b border-r border-[#d4d6da] p-0"><Box state={b} label={t + " 显示名称"} /></td>
              </tr>
            ))}
          </tbody>
        </table>
        <div className="w-[18px] pl-1 pt-[17px]"><div className="h-[144px] w-[10px] rounded-full bg-[#cbcbcb]" /></div>
      </div>
      <div className="flex h-12 shrink-0 items-center justify-end pr-[10px]">
        <button type="button" className="h-8 w-[113px] rounded-[4px] border border-[#d0d0d0] bg-white">恢复默认设置</button>
      </div>
    </aside>
  );
}

function Rebar({ a, b, n }) {
  return (
    <span className="flex items-center leading-5">
      {a}
      <Svg s={14} vb={14} className="mb-1 ml-px"><ellipse cx="7" cy="7" rx="5" ry="3" stroke="#000" /><path d={n === 3 ? "M7 1v12M5 2v8M9 2v8M2 7h10M4 11h6" : "M7 1v12M2 7h10M4 11h6M5 2h4"} stroke="#000" /></Svg>
      {b}
    </span>
  );
}

function BarShape() {
  return (
    <div className="flex flex-col pl-[22px] pr-1">
      <span className="pr-4 text-center font-['Liberation_Serif',serif] text-[15px] leading-[18px] text-[#f00]">L</span>
      <span className="h-[2px] bg-black" />
    </div>
  );
}

function Dialog() {
  const head = ["", "筋号", "钢筋信息", "图号", "钢筋图形", "长度(mm)", "加强筋类型"];
  const btn = "h-8 w-[100px] rounded-[4px] border border-[#d0d0d0] bg-white";
  const td = "border-b border-r border-[#d4d6da] p-0 pl-[3px]";
  return (
    <div role="dialog" aria-label="编辑其它钢筋" className="absolute left-[346px] top-[247px] flex w-[865px] flex-col border border-t-0 border-[#b9c6d8] bg-[#efefef]">
      <div className="flex h-[34px] items-center justify-between bg-[#2b80e2] pl-[10px] pr-[11px] text-white">
        编辑其它钢筋
        <button type="button" aria-label="关闭">
          <Svg s={12} vb={12}><path d="M2 2l8 8M10 2l-8 8" stroke="#fff" strokeWidth="2" /></Svg>
        </button>
      </div>
      <div className="px-[14px] pb-4">
        <p className="pb-2 pt-[14px] leading-5">其它钢筋列表：</p>
        <div className="flex h-[319px] flex-col border border-[#c3c6cb] bg-white">
          <table className="w-full table-fixed border-collapse whitespace-nowrap">
            <colgroup>
              <col className="w-[27px]" /><col className="w-[101px]" /><col className="w-[101px]" /><col className="w-[81px]" /><col className="w-[252px]" /><col className="w-[126px]" /><col />
            </colgroup>
            <thead>
              <tr className="h-[26px]">
                {head.map((h) => (
                  <th key={h} className={"border-b border-r p-0 " + (h === "钢筋图形" ? "border-[#6aa9ea] bg-[#7fbafa] font-medium text-white" : "border-[#c9cbd0] bg-[#eee] font-normal text-[#444]")}>{h}</th>
                ))}
              </tr>
            </thead>
            <tbody>
              <tr className="h-11">
                <th className="border-b border-r border-[#6aa9ea] bg-[#7fbafa] p-0 text-white">1</th>
                <td className={td}>1</td>
                <td className={td}><Rebar a="3" b="20" n={3} /></td>
                <td className={td}>1</td>
                <td className="p-0 outline-2 -outline-offset-2 outline-[#6aa9ea]"><BarShape /></td>
                <td className={td}>0</td>
                <td className={td}>水平加强筋</td>
              </tr>
              <tr className="h-[26px]">
                <th className="border-b border-r border-[#c9cbd0] bg-[#eee] p-0 font-normal text-[#444]">2</th>
                <td className={td}>2</td>
                <td className={td}><Rebar a="3" b="18" n={1} /></td>
                <td className={td}>1</td>
                <td className="border-b border-r border-[#d4d6da] p-0"><BarShape /></td>
                <td className={td}>0</td>
                <td className={td}>垂直加强筋</td>
              </tr>
              <tr className="h-[26px]">
                <th className="border-b border-r border-[#c9cbd0] bg-[#eee] p-0 font-normal text-[#444]">3</th>
                {[1, 2, 3, 4, 5, 6].map((i) => <td key={i} className={td} />)}
              </tr>
            </tbody>
          </table>
          <div className="mb-[3px] ml-[18px] mt-auto h-[10px] w-[663px] rounded-full bg-[#cbcbcb]" />
        </div>
        <div className="mt-2 flex gap-2">
          <button type="button" className={btn}>插入</button>
          <button type="button" className={btn}>删除</button>
          <button type="button" className="ml-auto h-8 w-[100px] rounded-[4px] bg-[#2b80e2] text-white">确定</button>
          <button type="button" className={btn}>取消</button>
        </div>
      </div>
      <Svg s={12} vb={12} className="absolute bottom-1 right-1"><path d="M9 0h2v2H9zM9 4h2v2H9zM9 8h2v2H9zM5 4h2v2H5zM5 8h2v2H5zM1 8h2v2H1z" fill="#7a8494" /></Svg>
    </div>
  );
}

function Status() {
  const b = "flex h-8 items-center justify-center border border-[#9b9b9b] bg-[#cecece] ";
  return (
    <footer className="flex h-[38px] shrink-0 items-center whitespace-nowrap border-b-2 border-white bg-[#dddddf] pl-[3px] pt-px text-[#444]">
      <span className="w-[328px]">X = 8129 Y = -1986 Z = -3050</span>
      <span className="w-[51px]">层高：</span>
      <span className="w-[53px]">3</span>
      <span className="w-[51px]">标高：</span>
      <span className="w-[115px]">-3.05~-0.05</span>
      <span className="w-[129px]">0</span>
      <span className="w-[129px]">隐藏：0</span>
      <div className="flex items-center gap-[5px]">
        <button type="button" aria-label="正交" className={b + "w-[31px]"}>
          <Svg><path d="M4 3v14h14M4 11h5v6" stroke="#555" strokeWidth="1.300" /></Svg>
        </button>
        <button type="button" aria-label="框选" className="flex h-8 w-[45px] items-center justify-center gap-1 border-2 border-[#56a5fa] bg-white">
          <Svg s={22} vb={22}><path d="M4 4h15v16H4z" stroke={B} strokeWidth="1.300" /><path d="M1 1h7v6H1z" fill={O} /></Svg>
          <Caret />
        </button>
        <button type="button" aria-label="交点" disabled className={b + "ml-[2px] w-[31px]"}>
          <Svg><path d="M1 1l18 18M19 1L1 19" stroke="#999" strokeWidth="1.300" /></Svg>
        </button>
        <button type="button" aria-label="角度" className={b + "ml-[2px] w-[45px] gap-2"}>
          <Svg><path d="M17 3L2 17h17" stroke="#555" strokeWidth="1.300" /><path d="M8 8h4v4H8z" fill="#444" /></Svg>
          <Caret />
        </button>
        <button type="button" aria-label="偏移" className={b + "w-[45px] gap-2"}>
          <Svg><path d="M4 2v8M0 6h8" stroke="#555" strokeWidth="1.300" /><path d="M8 12h12v5H8z" fill="#444" /></Svg>
          <Caret />
        </button>
        <button type="button" className={b + "w-[91px]"}>跨图层选择</button>
        <button type="button" className={b + "-ml-px w-[76px]"}>折线选择</button>
      </div>
      <span className="ml-2">在此处添加剪力墙构件的其他特殊设计的钢筋。</span>
      <span className="ml-auto pr-9">1000 FPS</span>
    </footer>
  );
}

function Taskbar() {
  return (
    <div className="flex h-[50px] shrink-0 items-stretch justify-between bg-[linear-gradient(to_right,#dad6d5_0%,#d9d9d8_25%,#cfdde4_46%,#dddcda_60%,#ecdedb_70%,#ecdedb_78%,#d6dadb_84%,#cfd9de_89%,#d9d9d8_100%)]">
      <div className="flex items-stretch">
        <button type="button" aria-label="开始" className="grid w-[60px] place-items-center">
          <Svg><path d="M0 3l8-1v7H0zM9 2l11-2v9H9zM0 10.500h8v7l-8-1zM9 10.500h11V20L9 18z" fill="#000" /></Svg>
        </button>
        <button type="button" aria-label="引擎" className="grid w-[68px] place-items-center">
          <Svg s={30} vb={30}><path d="M15 1l13 7v14l-13 7-13-7V8z" fill="#3d4248" /><path d="M15 6L6 22l9-3 9 3z" fill="#1c1f22" /><path d="M15 6l9 16-9-3z" fill="#9fa4a9" /><path d="M15 1l13 7-4 14L15 6z" fill="#595f66" /></Svg>
        </button>
        <button type="button" aria-label="CAD" className="mx-[3px] grid w-[51px] place-items-center border-b-[3px] border-[#0a78d7] pt-[3px]">
          <Svg s={30} vb={30}><rect width="30" height="30" rx="4" fill="#53616e" /><rect x="2" y="2" width="26" height="26" fill="#1069c4" /><path d="M15 6l-3 5h6z" stroke="#cfe3fb" /><text x="15" y="21" textAnchor="middle" fontSize="11" fill="#fff" fontFamily="Roboto">CAD</text></Svg>
        </button>
        <button type="button" aria-label="土建计量" className="mx-[3px] grid w-[61px] place-items-center border-b-[3px] border-[#0a78d7] bg-[#f3f3f3] pt-[3px]">
          <Svg s={30} vb={30}><rect width="30" height="30" rx="5" fill="#2b87ee" /><path d="M6 7q9-3 18 0l-1 5q-3-2-5-1v13l-5 1V11q-4-1-6 1z" fill="#fff" /></Svg>
        </button>
        <button type="button" aria-label="浏览器" className="mx-[3px] grid w-[51px] place-items-center border-b-[3px] border-[#0a78d7] pt-[3px]">
          <Svg s={30} vb={30}>
            {["#a63df0", "#ff4438", "#ffc814", "#35c94a", "#2fa4f5"].map((c, i) => (
              <path key={c} d="M15 15C10 15 5 10 8 4c4-5 12-5 17 0-5-2-10 3-10 11z" fill={c} transform={`rotate(${i * 72} 15 15)`} />
            ))}
            <circle cx="15" cy="15" r="2.500" fill="#fff" />
          </Svg>
        </button>
      </div>
      <div className="flex items-center gap-[10px]">
        <Svg><path d="M3 14l7-7 7 7" stroke="#111" strokeWidth="1.300" /></Svg>
        <Svg><path d="M1 7h4l4-4v14l-4-4H1z" stroke="#111" strokeWidth="1.200" /><path d="M11 7q2 3 0 6" stroke="#111" strokeWidth="1.200" /><path d="M14 5q3 5 0 10M17 3q4 7 0 14" stroke="#999" strokeWidth="1.200" /></Svg>
        <FaSteam size={20} color="#173a63" aria-hidden="true" />
        <Svg><path d="M5 6h13v10H5V6M19 9v4" stroke="#111" strokeWidth="1.400" /><path d="M8 9h6v5H8zM0 4h6v5H0zM1 1h1v3H1zM4 1h1v3H4z" fill="#111" /><path d="M3 9v5h3" stroke="#111" /></Svg>
        <FaWeixin size={20} color="#2fc35a" aria-hidden="true" />
        <Svg><rect x="4.500" y="1" width="14.500" height="14.500" rx="2" stroke="#111" strokeWidth="1.500" /><path d="M1 5v13a1 1 0 001 1h13" stroke="#111" strokeWidth="1.500" /><circle cx="11.500" cy="8.500" r="3" stroke="#111" strokeWidth="2.200" /><path d="M11.500 3v11M6 8.500h11M8 5l7 7M15 5l-7 7" stroke="#111" strokeDasharray="2 7" strokeWidth="1.500" /></Svg>
        <Svg><path d="M3 18A15 15 0 0118 3M7 18A11 11 0 0118 7M11 18a7 7 0 017-7" stroke="#222" strokeWidth="1.300" /><circle cx="16.500" cy="17" r="1.600" fill="#111" /></Svg>
        <Svg><path d="M1 17L8 5h3L6 17zM9 17l6-12h4l-4 12h-3l2-7-2 7z" fill="#b7bbbf" /></Svg>
        <span className="w-5 text-center text-[18px] leading-5 text-[#333]">英</span>
        <Svg className="ml-[5px]"><path d="M2 2l16-2 2 17-17 3z" fill="#f2511b" /><path d="M15 6c-3-2-9-1-8 2s7 1 7 4-6 3-8 1" stroke="#fff" strokeWidth="2.600" /></Svg>
        <time className="ml-[6px] w-[88px] text-center leading-[23px] text-[#111]">
          <span className="block">15:28</span>
          <span className="block">2021/12/25</span>
        </time>
        <button type="button" aria-label="通知" className="ml-2 mr-[15px]">
          <Svg><path d="M0 1h20v15h-7l-3 4-3-4H0z" fill="#000" /><path d="M4 5h12M4 8.500h12M4 12h8" stroke="#ddd" strokeWidth="1.200" /></Svg>
        </button>
        <span className="mr-[5px] h-full w-px bg-[#aaa]" />
      </div>
    </div>
  );
}

export default function App() {
  return (
    <div className="relative flex h-screen w-full flex-col overflow-hidden bg-white font-['Noto_Sans','Noto_Sans_CJK_SC',sans-serif] text-[15px] leading-5 text-[#1a1a1a]">
      <Header />
      <Ribbon />
      <Combos />
      <main className="flex min-h-0 flex-1 bg-[#f6f6f7]">
        <NavPanel />
        <MidPanel />
        <div className="relative ml-1 min-w-0 flex-1 overflow-hidden bg-black">
          <Scene />
          <ViewBar />
        </div>
        <div className="flex w-[6px] shrink-0 flex-col justify-center bg-white">
          <button type="button" aria-label="收起面板" className="flex h-[126px] items-center bg-[#657080]">
            <Svg s={5} vb={5}><path d="M0 0l4 2.500L0 5z" fill="#d8dbe0" /></Svg>
          </button>
        </div>
        <DisplayPanel />
      </main>
      <Status />
      <Taskbar />
      <Dialog />
    </div>
  );
}
